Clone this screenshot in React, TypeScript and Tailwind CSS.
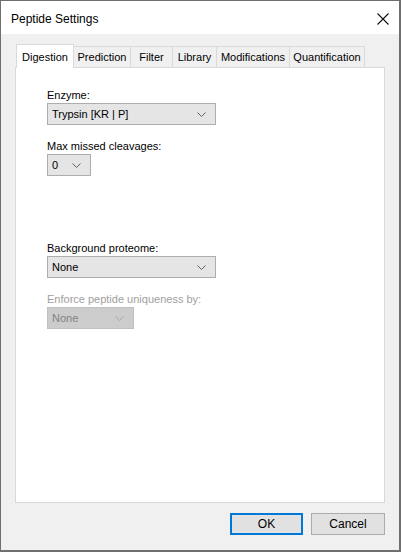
import React from "react";

const tabs = [
  { name: "Prediction", w: "w-[57px]" },
  { name: "Filter", w: "w-[42px]" },
  { name: "Library", w: "w-[44px]" },
  { name: "Modifications", w: "w-[73px]" },
  { name: "Quantification", w: "w-[75px]" },
];

function Chevron({ disabled }: { disabled?: boolean }) {
  return (
    <svg width="9" height="5" viewBox="0 0 9 5" className="shrink-0">
      <path
        d="M0.5 0.5 L4.5 4.5 L8.5 0.5"
        fill="none"
        stroke={disabled ? "#a8a8a8" : "#606060"}
        strokeWidth="1"
      />
    </svg>
  );
}

function Combo({
  value,
  width,
  disabled,
}: {
  value: string;
  width: string;
  disabled?: boolean;
}) {
  return (
    <div
      className={`${width} h-[22px] flex items-center justify-between pl-[4px] pr-[9px] border ${
        disabled
          ? "bg-[#cccccc] border-[#bfbfbf] text-[#838383]"
          : "bg-[#e5e5e5] border-[#adadad] text-black"
      }`}
    >
      <span>{value}</span>
      <Chevron disabled={disabled} />
    </div>
  );
}

function Field({
  label,
  children,
  disabled,
}: {
  label: string;
  children: React.ReactNode;
  disabled?: boolean;
}) {
  return (
    <div className="flex flex-col">
      <div
        className={`h-[15px] leading-[15px] ${
          disabled ? "text-[#a0a0a0]" : "text-black"
        }`}
      >
        {label}
      </div>
      {children}
    </div>
  );
}

export default function App() {
  return (
    <div
      className="w-[401px] h-[552px] flex flex-col bg-[#f0f0f0] border-l border-t border-r-2 border-b-2 border-[#6f6f6f] text-[11px] text-black"
      style={{ fontFamily: '"Liberation Sans", Arial, sans-serif' }}
    >
      <div className="h-[33px] shrink-0 bg-white flex items-center justify-between pl-[10px] pr-[10px] pt-[2px]">
        <span className="text-[12px]">Peptide Settings</span>
        <svg width="12" height="12" viewBox="0 0 12 12">
          <path d="M0.5 0.5 L11.5 11.5 M11.5 0.5 L0.5 11.5" stroke="#111" strokeWidth="1.1" />
        </svg>
      </div>

      <div className="flex-1 flex flex-col px-[14px] pt-[10px] pb-[16px]">
        <div className="flex items-end pl-[1px]">
          <div className="relative z-10 -mb-px w-[58px] h-[24px] flex items-start justify-center pt-[4px] bg-white border border-b-0 border-[#d9d9d9]">
            Digestion
          </div>
          {tabs.map((t) => (
            <div
              key={t.name}
              className={`${t.w} h-[21px] flex items-center justify-center bg-[#f0f0f0] border border-l-0 border-b-0 border-[#d9d9d9]`}
            >
              {t.name}
            </div>
          ))}
        </div>

        <div className="h-[436px] bg-white border border-[#d9d9d9] pl-[31px] pt-[20px] flex flex-col">
          <Field label="Enzyme:">
            <Combo value="Trypsin [KR | P]" width="w-[169px]" />
          </Field>
          <div className="mt-[14px]">
            <Field label="Max missed cleavages:">
              <Combo value="0" width="w-[44px]" />
            </Field>
          </div>
          <div className="mt-[65px]">
            <Field label="Background proteome:">
              <Combo value="None" width="w-[169px]" />
            </Field>
          </div>
          <div className="mt-[14px]">
            <Field label="Enforce peptide uniqueness by:" disabled>
              <Combo value="None" width="w-[87px]" disabled />
            </Field>
          </div>
        </div>

        <div className="mt-[10px] flex justify-end gap-[8px]">
          <button className="w-[73px] h-[22px] bg-[#e1e1e1] border-2 border-[#0078d7] text-[12px]">
            OK
          </button>
          <button className="w-[74px] h-[22px] bg-[#e1e1e1] border border-[#adadad] text-[12px]">
            Cancel
          </button>
        </div>
      </div>
    </div>
  );
}
